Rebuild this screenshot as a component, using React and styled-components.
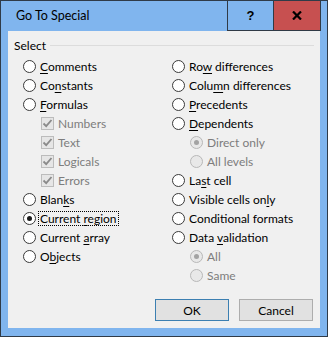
import React from "react";
import styled, { createGlobalStyle, css } from "styled-components";

const GlobalStyle = createGlobalStyle`
  html, body { margin: 0; padding: 0; background: #ffffff; }
  body { font-family: Lato, "Noto Sans", "Liberation Sans", sans-serif; }
  * { box-sizing: border-box; }
`;

const Window = styled.div`
  width: 328px;
  height: 337px;
  border: 1px solid #2f3b48;
  background: #80b5ee;
  display: flex;
  flex-direction: column;
`;

const TitleBar = styled.div`
  height: 30px;
  display: flex;
  align-items: flex-start;
  flex: none;
`;

const Title = styled.div`
  flex: 1;
  height: 29px;
  display: flex;
  align-items: center;
  padding-left: 15px;
  font-size: 12.5px;
  color: #000;
`;

const CaptionButtons = styled.div`
  display: flex;
  margin-right: 6px;
  height: 30px;
  border: 1px solid #303a46;
  border-top: none;
`;

const CaptionButton = styled.div`
  width: 46px;
  height: 29px;
  display: flex;
  align-items: center;
  justify-content: center;
  background: ${(p) => (p.$close ? "#c75050" : "#80b5ee")};
  border-right: ${(p) => (p.$close ? "none" : "1px solid #303a46")};
  font-family: "Liberation Sans", Arial, sans-serif;
  font-weight: bold;
  font-size: 13px;
  color: #000;
`;

const Body = styled.div`
  flex: 1;
  margin: 0 7px 8px 7px;
  background: #f0f0f0;
  display: flex;
  flex-direction: column;
  padding: 6px 7px 7px 0;
  font-size: 12px;
  color: #000;
`;

const GroupHeader = styled.div`
  display: flex;
  align-items: center;
  height: 16px;
  padding-left: 6px;
`;

const GroupLine = styled.div`
  flex: 1;
  height: 1px;
  background: #dcdcdc;
  margin-left: 4px;
  margin-right: -1px;
`;

const Columns = styled.div`
  display: grid;
  grid-template-columns: 149px 1fr;
  margin-top: 4px;
  padding-left: 15px;
`;

const Column = styled.div`
  display: flex;
  flex-direction: column;
`;

const Row = styled.div`
  height: 19px;
  display: flex;
  align-items: center;
  padding-left: ${(p) => (p.$sub ? "18px" : "0")};
  color: ${(p) => (p.$disabled ? "#7d7d7d" : "#000")};
  white-space: nowrap;
`;

const Radio = styled.span`
  width: 13px;
  height: 13px;
  flex: none;
  border-radius: 50%;
  border: 1px solid ${(p) => (p.$disabled ? "#b8b8b8" : "#3a3a3a")};
  background: ${(p) => (p.$disabled ? "#e8e8e8" : "#ffffff")};
  display: flex;
  align-items: center;
  justify-content: center;
  ${(p) =>
    p.$checked &&
    css`
      &::after {
        content: "";
        width: 5px;
        height: 5px;
        border-radius: 50%;
        background: ${p.$disabled ? "#a3a3a3" : "#1b1b1b"};
      }
    `}
`;

const CheckBox = styled.span`
  width: 13px;
  height: 13px;
  flex: none;
  border: 1px solid #bcbcbc;
  background: #e6e6e6;
  display: flex;
  align-items: center;
  justify-content: center;
`;

const Label = styled.span`
  line-height: 13px;
  margin-left: ${(p) => (p.$focused ? "2px" : "4px")};
  padding: ${(p) => (p.$focused ? "0 1px" : "0")};
  border: ${(p) => (p.$focused ? "1px dotted #000" : "none")};
`;

const Key = styled.span`
  text-decoration: underline;
  text-underline-offset: 2px;
  text-decoration-thickness: 1px;
`;

const ButtonRow = styled.div`
  margin-top: auto;
  display: flex;
  justify-content: flex-end;
  gap: 10px;
`;

const Button = styled.div`
  width: 74px;
  height: 22px;
  display: flex;
  align-items: center;
  justify-content: center;
  background: #e1e1e1;
  border: 1px solid ${(p) => (p.$default ? "#3c7fb1" : "#adadad")};
  font-size: 12px;
  color: #000;
`;

const Check = () => (
  <svg width="11" height="11" viewBox="0 0 11 11">
    <path d="M1.5 5.5 L4.2 8.2 L9.5 2" fill="none" stroke="#8a8a8a" strokeWidth="1.8" />
  </svg>
);

const Text = ({ text, k }) => {
  if (k == null) return text;
  const before = text.slice(0, k);
  const after = text.slice(k + 1);
  return (
    <>
      {before ? before : null}
      <Key>{text[k]}</Key>
      {after ? after : null}
    </>
  );
};

const RadioRow = ({ text, k, checked, disabled, sub, focused }) => (
  <Row $sub={sub} $disabled={disabled}>
    <Radio $checked={checked} $disabled={disabled} />
    <Label $focused={focused}>
      <Text text={text} k={k} />
    </Label>
  </Row>
);

const CheckRow = ({ text }) => (
  <Row $sub $disabled>
    <CheckBox>
      <Check />
    </CheckBox>
    <Label>{text}</Label>
  </Row>
);

export default function App() {
  return (
    <>
      <GlobalStyle />
      <Window>
        <TitleBar>
          <Title>Go To Special</Title>
          <CaptionButtons>
            <CaptionButton>?</CaptionButton>
            <CaptionButton $close>
              <svg width="10" height="9" viewBox="0 0 10 9">
                <path d="M1 0.5 L9 8.5 M9 0.5 L1 8.5" stroke="#000" strokeWidth="2.2" />
              </svg>
            </CaptionButton>
          </CaptionButtons>
        </TitleBar>
        <Body>
          <GroupHeader>
            <span>Select</span>
            <GroupLine />
          </GroupHeader>
          <Columns>
            <Column>
              <RadioRow text="Comments" k={0} />
              <RadioRow text="Constants" k={2} />
              <RadioRow text="Formulas" k={0} />
              <CheckRow text="Numbers" />
              <CheckRow text="Text" />
              <CheckRow text="Logicals" />
              <CheckRow text="Errors" />
              <RadioRow text="Blanks" k={4} />
              <RadioRow text="Current region" k={8} checked focused />
              <RadioRow text="Current array" k={8} />
              <RadioRow text="Objects" k={1} />
            </Column>
            <Column>
              <RadioRow text="Row differences" k={2} />
              <RadioRow text="Column differences" k={4} />
              <RadioRow text="Precedents" k={0} />
              <RadioRow text="Dependents" k={0} />
              <RadioRow text="Direct only" sub disabled checked />
              <RadioRow text="All levels" sub disabled />
              <RadioRow text="Last cell" k={2} />
              <RadioRow text="Visible cells only" k={16} />
              <RadioRow text="Conditional formats" k={6} />
              <RadioRow text="Data validation" k={5} />
              <RadioRow text="All" sub disabled checked />
              <RadioRow text="Same" sub disabled />
            </Column>
          </Columns>
          <ButtonRow>
            <Button $default>OK</Button>
            <Button>Cancel</Button>
          </ButtonRow>
        </Body>
      </Window>
    </>
  );
}
